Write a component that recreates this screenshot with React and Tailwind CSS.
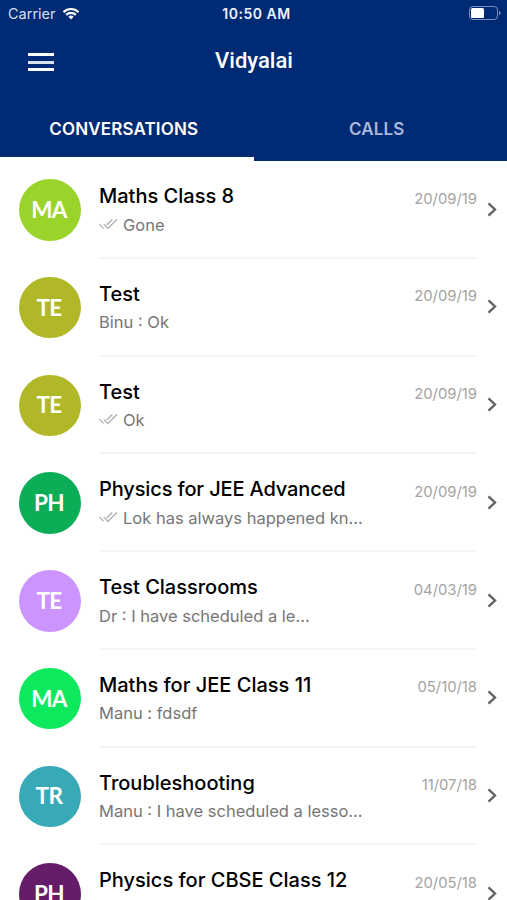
const CONVERSATIONS = [
  { id: 1, initials: 'MA', color: 'bg-[#9ad42b]', name: 'Maths Class 8', message: 'Gone', date: '20/09/19', sent: true },
  { id: 2, initials: 'TE', color: 'bg-[#b1b827]', name: 'Test', message: 'Binu : Ok', date: '20/09/19' },
  { id: 3, initials: 'TE', color: 'bg-[#b1b827]', name: 'Test', message: 'Ok', date: '20/09/19', sent: true },
  { id: 4, initials: 'PH', color: 'bg-[#0bad57]', name: 'Physics for JEE Advanced', message: 'Lok has always happened kn...', date: '20/09/19', sent: true, tight: true },
  { id: 5, initials: 'TE', color: 'bg-[#cc94ff]', name: 'Test Classrooms', message: 'Dr : I have scheduled a le...', date: '04/03/19' },
  { id: 6, initials: 'MA', color: 'bg-[#0de85c]', name: 'Maths for JEE Class 11', message: 'Manu : fdsdf', date: '05/10/18' },
  { id: 7, initials: 'TR', color: 'bg-[#38a9b7]', name: 'Troubleshooting', message: 'Manu : I have scheduled a lesso...', date: '11/07/18' },
  { id: 8, initials: 'PH', color: 'bg-[#651c69]', name: 'Physics for CBSE Class 12', message: '', date: '20/05/18' },
];

function StatusBar() {
  return (
    <div className="grid h-7 grid-cols-3 items-center pl-2 pr-[6px] text-[14px] text-white">
      <div className="flex items-center gap-[6px]">
        <span className="text-[14.5px] text-[#d5def0]">Carrier</span>
        <svg className="-mt-[2px]" width="18" height="13" viewBox="0 0 17 13" fill="none" stroke="white" strokeWidth="2.2">
          <path d="M1 5.1a10.6 10.6 0 0 1 15 0" />
          <path d="M3.7 7.9a6.8 6.8 0 0 1 9.6 0" />
          <path d="M8.5 12.4 5.9 9.8a3.7 3.7 0 0 1 5.2 0z" fill="white" stroke="none" />
        </svg>
      </div>
      <span className="-mt-[1px] whitespace-nowrap pl-[4px] text-center font-semibold tracking-[0.5px] text-[#eef2fa]">10:50 AM</span>
      <svg className="-mt-[2px] justify-self-end" width="32" height="14" viewBox="0 0 32 14">
        <rect x="0.5" y="0.5" width="28" height="13" rx="3.5" fill="none" stroke="#7d8fb9" />
        <rect x="2" y="2" width="13" height="10" rx="1.5" fill="white" />
        <path d="M30 5v4c1.2-.4 1.6-1.1 1.6-2S31.2 5.4 30 5z" fill="#7d8fb9" />
      </svg>
    </div>
  );
}

function Tabs() {
  return (
    <div className="grid h-[62px] grid-cols-2 text-center text-[17px] font-semibold leading-[55px]">
      <div className="border-b-4 border-white pr-[6px] pt-[3px] tracking-[0.15px] text-white">CONVERSATIONS</div>
      <div className="pr-[7px] pt-[3px] tracking-[0.15px] text-[#a9b8da]">CALLS</div>
    </div>
  );
}

function DoubleCheck() {
  return (
    <svg className="mr-[5px] shrink-0" width="19" height="12" viewBox="0 0 19 12" fill="none" stroke="#a8a8a8" strokeWidth="1.1">
      <path d="M0.5 5.2 4.6 9.4" />
      <path d="M4.8 5.2 8.8 9.4 18 0.5" />
      <path d="M7.7 6 13.3 0.5" />
    </svg>
  );
}

function ConversationRow({ item }) {
  return (
    <div className="flex h-[97.75px] shrink-0 pl-[19px]">
      <div className={`mt-[18px] flex size-[61.5px] shrink-0 items-center justify-center rounded-full pr-[1.5px] font-['Lato',sans-serif] text-[22.5px] font-bold tracking-[-0.6px] text-white ${item.color}`}>
        {item.initials}
      </div>
      <div className="ml-[18.5px] flex w-[378px] shrink-0 justify-between border-b-2 border-[#f5f5f5]">
        <div className="pt-[21px]">
          <p className={`whitespace-nowrap text-[20px] font-medium leading-7 text-black ${item.tight ? 'tracking-[-0.13px]' : ''}`}>{item.name}</p>
          <div className="mt-[2.5px] flex items-center whitespace-nowrap text-[16.5px] leading-6 text-[#767676]">
            {item.sent && <DoubleCheck />}
            {item.message}
          </div>
        </div>
        <span className="pt-[27.5px] text-[14.8px] leading-5 text-[#a3a3a3]">{item.date}</span>
      </div>
      <svg className="ml-[10px] mt-[40.5px]" width="11" height="15" viewBox="0 0 11 15" fill="none" stroke="#626262" strokeWidth="2.4">
        <path d="M1.5 1.3 8 7.5 1.5 13.7" />
      </svg>
    </div>
  );
}

export default function App() {
  return (
    <div className="flex h-[900px] w-[507px] flex-col overflow-hidden bg-white font-['Inter',sans-serif]">
      <header className="h-[161px] shrink-0 bg-[#002b74]">
        <StatusBar />
        <div className="grid h-[71px] grid-cols-3 pl-7">
          <button className="mt-[25px] flex h-[18px] w-[26px] flex-col justify-between" aria-label="Menu">
            <span className="h-[3px] w-full bg-white" />
            <span className="h-[3px] w-full bg-[#dbe3f3]" />
            <span className="h-[3px] w-full bg-white" />
          </button>
          <h1 className="-ml-[27px] pt-[17px] text-center font-['Roboto',sans-serif] text-[22px] font-medium leading-8 text-white">Vidyalai</h1>
        </div>
        <Tabs />
      </header>
      <main className="flex flex-col">
        {CONVERSATIONS.map((item) => (
          <ConversationRow key={item.id} item={item} />
        ))}
      </main>
    </div>
  );
}
